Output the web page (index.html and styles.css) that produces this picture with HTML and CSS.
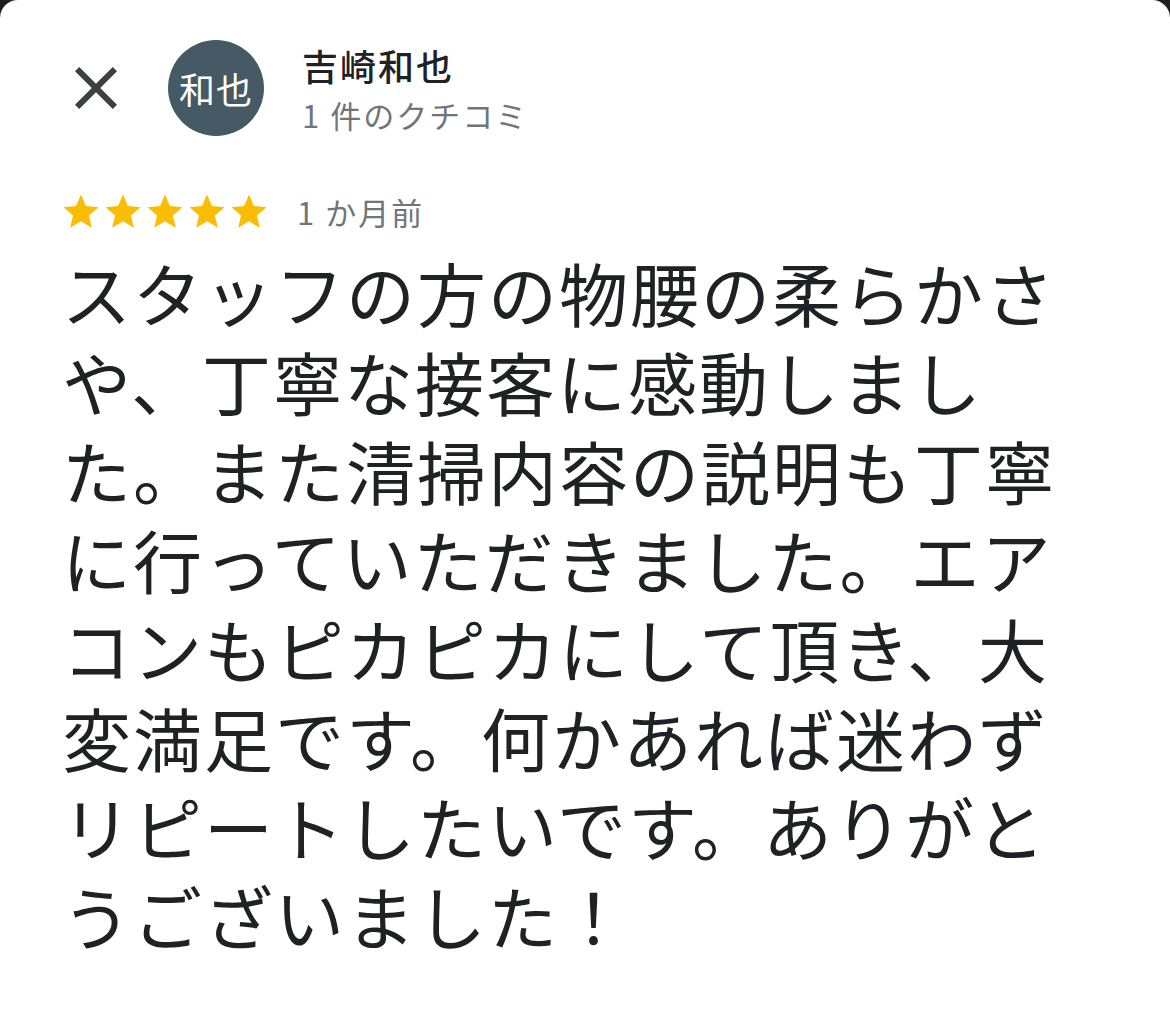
FILE: index.html
```html
<!DOCTYPE html>
<html lang="ja">
<head>
<meta charset="utf-8">
<title>クチコミ</title>
<link rel="stylesheet" href="styles.css">
</head>
<body>
<div class="sheet">
  <header class="header">
    <button class="close" aria-label="閉じる">
      <svg viewBox="0 0 24 24" width="72" height="72"><path d="M19 6.41L17.59 5 12 10.59 6.41 5 5 6.41 10.59 12 5 17.59 6.41 19 12 13.41 17.59 19 19 17.59 13.41 12z"/></svg>
    </button>
    <div class="avatar">和也</div>
    <div class="who">
      <div class="name">吉崎和也</div>
      <div class="count">1 件のクチコミ</div>
    </div>
  </header>
  <div class="meta">
    <div class="stars">
      <svg viewBox="0 0 24 24" width="42" height="42"><path d="M12 17.27L18.18 21l-1.64-7.03L22 9.24l-7.19-.61L12 2 9.19 8.63 2 9.24l5.46 4.73L5.82 21z"/></svg>
      <svg viewBox="0 0 24 24" width="42" height="42"><path d="M12 17.27L18.18 21l-1.64-7.03L22 9.24l-7.19-.61L12 2 9.19 8.63 2 9.24l5.46 4.73L5.82 21z"/></svg>
      <svg viewBox="0 0 24 24" width="42" height="42"><path d="M12 17.27L18.18 21l-1.64-7.03L22 9.24l-7.19-.61L12 2 9.19 8.63 2 9.24l5.46 4.73L5.82 21z"/></svg>
      <svg viewBox="0 0 24 24" width="42" height="42"><path d="M12 17.27L18.18 21l-1.64-7.03L22 9.24l-7.19-.61L12 2 9.19 8.63 2 9.24l5.46 4.73L5.82 21z"/></svg>
      <svg viewBox="0 0 24 24" width="42" height="42"><path d="M12 17.27L18.18 21l-1.64-7.03L22 9.24l-7.19-.61L12 2 9.19 8.63 2 9.24l5.46 4.73L5.82 21z"/></svg>
    </div>
    <span class="date">1 か月前</span>
  </div>
  <p class="review">スタッフの方の物腰の柔らかさや、丁寧な接客に感動しました。また清掃内容の説明も丁寧に行っていただきました。エアコンもピカピカにして頂き、大変満足です。何かあれば迷わずリピートしたいです。ありがとうございました！</p>
</div>
</body>
</html>
```
FILE: styles.css
```css
html, body {
  margin: 0;
  padding: 0;
  background: #1e1e1e;
}
body {
  font-family: "Noto Sans CJK JP", "Noto Sans", sans-serif;
  color: #202124;
}
.sheet {
  background: #ffffff;
  border-radius: 18px 18px 0 0;
  min-height: 1031px;
  padding: 40px 64px 0 64px;
  box-sizing: border-box;
}
.header {
  display: flex;
  align-items: center;
  height: 96px;
}
.close {
  width: 72px;
  height: 72px;
  margin-left: -4px;
  padding: 0;
  border: 0;
  background: none;
  display: flex;
  align-items: center;
  justify-content: center;
}
.close svg {
  display: block;
  fill: #3c4043;
}
.avatar {
  width: 96px;
  height: 96px;
  margin-left: 36px;
  border-radius: 50%;
  background: #455a64;
  color: #ffffff;
  font-size: 36px;
  line-height: 96px;
  text-align: center;
  letter-spacing: 1px;
}
.who {
  margin-left: 38px;
  padding-top: 4px;
  display: flex;
  flex-direction: column;
}
.name {
  font-size: 36px;
  font-weight: 500;
  line-height: 50px;
  letter-spacing: 2px;
  color: #202124;
}
.count {
  font-size: 31px;
  line-height: 50px;
  letter-spacing: 2px;
  color: #70757a;
}
.meta {
  display: flex;
  align-items: center;
  margin-top: 55px;
  height: 42px;
}
.stars {
  display: flex;
  margin-left: -4px;
}
.stars svg {
  display: block;
  fill: #fbbc04;
}
.date {
  margin-left: 27px;
  font-size: 31px;
  line-height: 42px;
  letter-spacing: 2px;
  color: #70757a;
}
.review {
  margin: 15px 0 0 -2px;
  width: 1032px;
  font-size: 69px;
  font-weight: 400;
  line-height: 89px;
  letter-spacing: 2px;
  color: #202124;
}
```
